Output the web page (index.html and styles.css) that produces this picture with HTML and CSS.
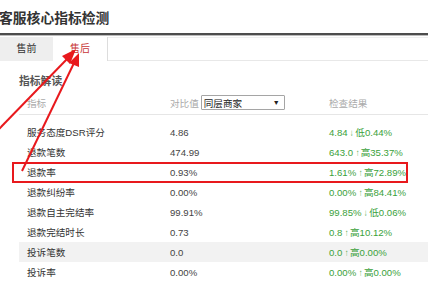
FILE: index.html
```html
<!DOCTYPE html>
<html lang="zh">
<head>
<meta charset="UTF-8">
<link rel="stylesheet" href="styles.css">
</head>
<body>
<h1 class="title">客服核心指标检测</h1>
<div class="tabs">
	<div class="tab">售前</div>
	<div class="tab active">售后</div>
	<div class="tab-rest"></div>
</div>
<div class="panel">
	<h2 class="section">指标解读</h2>
	<div class="row head">
		<span>指标</span>
		<span class="compare">对比值 <span class="select">同层商家<i>▼</i></span></span>
		<span>检查结果</span>
	</div>
	<div class="row"><span>服务态度DSR评分</span><span class="val">4.86</span><span class="res">4.84 <b>↓</b>低0.44%</span></div>
	<div class="row"><span>退款笔数</span><span class="val">474.99</span><span class="res">643.0 <b>↑</b>高35.37%</span></div>
	<div class="row marked"><span>退款率</span><span class="val">0.93%</span><span class="res">1.61% <b>↑</b>高72.89%</span></div>
	<div class="row"><span>退款纠纷率</span><span class="val">0.00%</span><span class="res">0.00% <b>↑</b>高84.41%</span></div>
	<div class="row"><span>退款自主完结率</span><span class="val">99.91%</span><span class="res">99.85% <b>↓</b>低0.06%</span></div>
	<div class="row"><span>退款完结时长</span><span class="val">0.73</span><span class="res">0.8 <b>↑</b>高10.12%</span></div>
	<div class="row shaded"><span>投诉笔数</span><span class="val">0.0</span><span class="res">0.0 <b>↑</b>高0.00%</span></div>
	<div class="row"><span>投诉率</span><span class="val">0.00%</span><span class="res">0.00% <b>↑</b>高0.00%</span></div>
</div>

<!-- annotation arrows drawn over the page -->
<svg class="arrows" width="428" height="281" viewBox="0 0 428 281">
	<g stroke="#e8191d" stroke-width="2" fill="none">
		<line x1="-2" y1="130" x2="68" y2="58"/>
		<line x1="22" y1="171" x2="74" y2="63"/>
	</g>
	<g fill="#e8191d">
		<polygon points="76,49 62,56 70,64"/>
		<polygon points="79,53 69,63 79,67"/>
	</g>
</svg>
</body>
</html>
```

FILE: styles.css
```css
html {
	font-family: "Liberation Sans", "Noto Sans CJK SC", sans-serif;
}
body {
	margin: 0;
	width: 428px;
	height: 281px;
	overflow: hidden;
	position: relative;
	color: #333;
}

.title {
	margin: 0 0 0 -1px;
	height: 33px;
	line-height: 37px;
	font-size: 13.8px;
	font-weight: bold;
	color: #333;
	border-bottom: 2px solid #4d4d4d;
	box-shadow: 0 1px 0 #bbb;
}

/* tabs */
.tabs {
	display: flex;
	height: 24px;
	margin-top: 2px;
	font-size: 10px;
}
.tab {
	width: 53px;
	line-height: 24px;
	text-align: center;
	background: #eee;
	color: #333;
}
.tab.active {
	width: 54px;
	background: #fff;
	color: #c8373a;
	border-right: 1px solid #ddd;
}
.tab-rest {
	flex: 1;
	border-top: 1px solid #f0f0f0;
	border-bottom: 1px solid #e8e8e8;
}

.panel {
	padding-left: 19px;
}
.section {
	margin: 12px 0 0;
	font-size: 10.8px;
	line-height: 16px;
	font-weight: bold;
	color: #555;
}

/* metric rows */
.row {
	display: grid;
	grid-template-columns: 143px 159px 1fr;
	align-items: center;
	height: 20px;
	padding-left: 8px;
	font-size: 9.6px;
	position: relative;
}
.row.head {
	height: 23px;
	margin: 2px 0 7px;
	color: #aaa;
	border-bottom: 1px solid #e6e6e6;
}
.compare {
	display: flex;
	align-items: center;
	gap: 2px;
}
.select {
	display: flex;
	justify-content: space-between;
	align-items: center;
	box-sizing: border-box;
	width: 84px;
	height: 15px;
	padding: 0 4px 0 2px;
	border: 1px solid #a5a5a5;
	border-radius: 1px;
	background: #fff;
	color: #222;
}
.select i {
	font-style: normal;
	font-size: 7px;
}
.val { color: #444; }
.res { color: #3aa13a; }
.res b {
	display: inline-block;
	width: 5px;
	font-weight: normal;
	font-family: "Liberation Sans", sans-serif;
	transform: scaleX(0.7);
	transform-origin: left;
}
.shaded { background: #f2f2f2; }

.marked::after {
	content: "";
	position: absolute;
	left: -7px;
	right: 20px;
	top: 0;
	bottom: -1px;
	border: 2px solid #e8191d;
}

.arrows {
	position: absolute;
	left: 0;
	top: 0;
	pointer-events: none;
}
```
